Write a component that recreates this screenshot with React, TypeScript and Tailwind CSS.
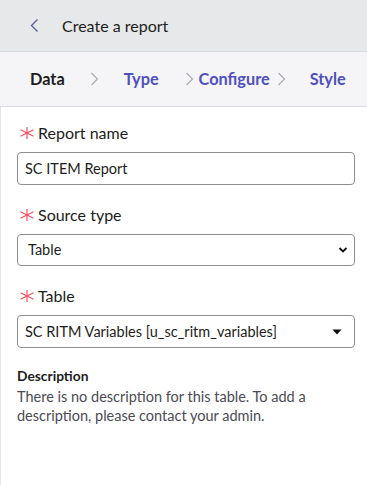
import React from "react";

const Asterisk = () => (
  <svg width="14" height="14" viewBox="0 0 14 14" className="shrink-0">
    <g stroke="#ef4f62" strokeWidth="1.2" strokeLinecap="round">
      <line x1="7" y1="1.5" x2="7" y2="12.5" />
      <line x1="1" y1="4" x2="13" y2="10" />
      <line x1="1" y1="10" x2="13" y2="4" />
    </g>
  </svg>
);

const Chevron = () => (
  <svg width="9" height="14" viewBox="0 0 9 14" className="shrink-0">
    <path d="M1.5 1l6 6-6 6" fill="none" stroke="#a8a9ae" strokeWidth="1.1" />
  </svg>
);

const Label = ({ text }: { text: string }) => (
  <div className="flex items-center gap-[4px] pl-[3px] text-[16px] text-[#1d1d20] leading-6">
    <Asterisk />
    <span>{text}</span>
  </div>
);

const App = () => {
  return (
    <div
      className="w-[367px] h-[485px] flex flex-col bg-white overflow-hidden"
      style={{ fontFamily: "Lato, 'Noto Sans', sans-serif" }}
    >
      {/* Header */}
      <div className="h-[52px] bg-[#e7e8ea] border-b border-[#d6d7da] flex items-center pl-[30px] shrink-0">
        <svg width="9" height="15" viewBox="0 0 9 15" className="shrink-0">
          <path d="M7.5 1.5l-6 6 6 6" fill="none" stroke="#5a5a9a" strokeWidth="1.3" />
        </svg>
        <span className="ml-[23px] text-[16px] text-[#1d1d20]">Create a report</span>
      </div>

      {/* Stepper */}
      <div className="h-[55px] bg-[#f5f5f7] border-b border-[#d9dadd] flex items-center pl-[30px] shrink-0 text-[16.3px] font-bold">
        <span className="text-[#1d1d20]">Data</span>
        <span className="ml-[25px]"><Chevron /></span>
        <span className="ml-[25px] text-[#4f4fbd]">Type</span>
        <span className="ml-[26px]"><Chevron /></span>
        <span className="ml-[5px] text-[#4f4fbd]">Configure</span>
        <span className="ml-[7px]"><Chevron /></span>
        <span className="ml-[24px] text-[#4f4fbd]">Style</span>
      </div>

      {/* Form */}
      <div className="flex-1 border-l border-[#e2e3e5] pl-[16px] pr-[12px] pt-[14px]">
        <Label text="Report name" />
        <div className="mt-[7px] h-[33px] border border-[#8d8e94] rounded-[4px] flex items-center px-[7px] text-[14.5px] text-[#1d1d20]">
          SC ITEM Report
        </div>

        <div className="mt-[18px]">
          <Label text="Source type" />
        </div>
        <div className="mt-[7px] h-[32px] border border-[#8d8e94] rounded-[4px] flex items-center justify-between pl-[10px] pr-[6px] text-[14.5px] text-[#1d1d20]">
          <span>Table</span>
          <svg width="10" height="8" viewBox="0 0 10 8">
            <path d="M1.5 2l3.5 3.5L8.5 2" fill="none" stroke="#111" strokeWidth="1.8" />
          </svg>
        </div>

        <div className="mt-[18px]">
          <Label text="Table" />
        </div>
        <div className="mt-[7px] h-[33px] border border-[#8d8e94] rounded-[4px] flex items-center justify-between pl-[7px] pr-[12px] text-[14.5px] text-[#1d1d20]">
          <span>SC RITM Variables [u_sc_ritm_variables]</span>
          <svg width="10" height="6" viewBox="0 0 10 6">
            <path d="M0.5 0.5h9L5 5.5z" fill="#111" />
          </svg>
        </div>

        <div className="mt-[20px] text-[13.8px] font-bold text-[#1d1d20] leading-4">Description</div>
        <p className="mt-[3px] text-[14.5px] leading-[19px] text-[#4a4b55]">
          There is no description for this table. To add a description, please contact your admin.
        </p>
      </div>
    </div>
  );
};

export default App;
